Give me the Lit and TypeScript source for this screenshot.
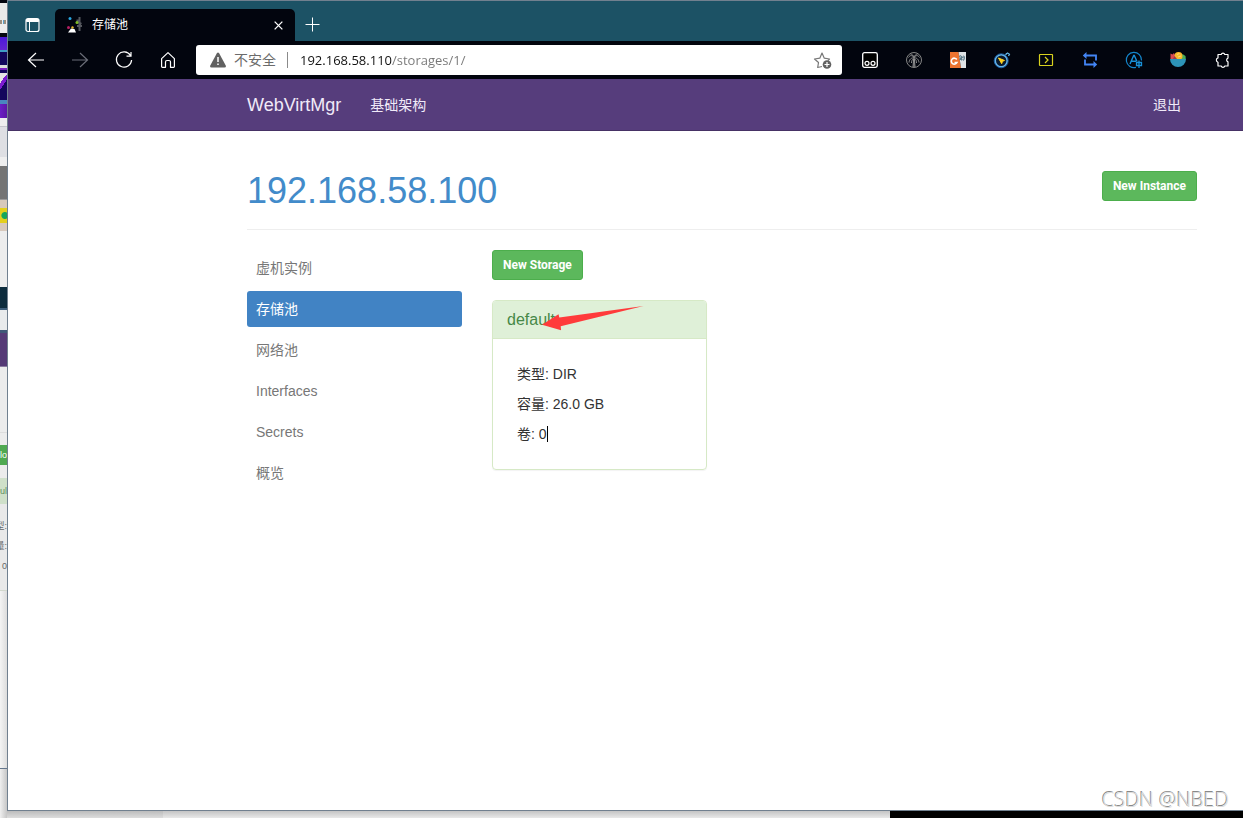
import { LitElement, html, css, svg } from "lit";
import { customElement, state } from "lit/decorators.js";

const icon = (body: unknown, size = 20) => html`<svg
  width=${size}
  height=${size}
  viewBox="0 0 20 20"
  fill="none"
  aria-hidden="true"
>${body}</svg>`;

const navIcons = [
  { label: "Back", art: svg`<path d="M18 10H2.5M10 3 2.5 10l7.5 7" stroke="#fff" stroke-width="1.2"/>` },
  { label: "Forward", art: svg`<path d="M2 10h15.500M10 3l7.500 7-7.500 7" stroke="#6b6e78" stroke-width="1.200"/>` },
  { label: "Refresh", art: svg`<path d="M16.500 5.500A7.600 7.600 0 1 0 17.600 10M17 2v4.200h-4.500" stroke="#fff" stroke-width="1.200"/>` },
  { label: "Home", art: svg`<path d="M3.600 8.600 10 2.600l6.400 6V16.500a.8.8 0 0 1-.8.8h-3.100V12a1.500 1.500 0 0 0-1.500-1.500H9A1.500 1.500 0 0 0 7.500 12v5.300H4.400a.8.8 0 0 1-.8-.8z" stroke="#fff" stroke-width="1.200" stroke-linejoin="round"/>` },
];

const extensions = [
  {
    label: "Tampermonkey",
    art: svg`<rect x="2.700" y="2.700" width="14.600" height="14.600" rx="1.800" fill="#000" stroke="#fff" stroke-width="1.300"/>
      <circle cx="7" cy="13.300" r="2" stroke="#fff" stroke-width="1.200"/><circle cx="13" cy="13.300" r="2" stroke="#fff" stroke-width="1.200"/>`,
  },
  {
    label: "Palm",
    art: svg`<circle cx="10" cy="10" r="7.500" stroke="#858585" stroke-width="1"/>
      <path d="M10 8v9M9 17l.6-8M11 17l-.6-8M10 7.500C8 5 6 5 4.500 7.500M10 7.500C12 5 14 5 15.500 7.500M10 8C7.500 7.500 5.500 9 5 12.500M10 8c2.500-.5 4.500 1 5 4.500M10 7.500C9.500 5.500 8 4 6.500 4M10 7.500C10.500 5.500 12 4 13.500 4M9.500 9c-1.500.5-2 2-2 4M10.500 9c1.500.5 2 2 2 4" stroke="#9a9a9a" stroke-width=".9"/>`,
  },
  {
    label: "Translate",
    art: svg`<path d="M2 2h8.500l2.500 16H2z" fill="#ed7430"/><path d="M10.500 2H18v16h-5z" fill="#dfe3e6"/>
      <path d="M8.800 9.500A3 3 0 1 0 9 12.500H6.500" stroke="#fff" stroke-width="1.600"/>
      <path d="M11 6.500l2-1M12 9.500l1.500-3 2 1.500M11.500 9.500h3M15 6c2 0 2 3 0 4.500M13.500 10.500v-4" stroke="#5f7d8c" stroke-width="1.100"/>`,
  },
  {
    label: "Timer",
    art: svg`<circle cx="9.200" cy="10.800" r="6" fill="#0b1a2c" stroke="#64b5ea" stroke-width="1.600"/><circle cx="9.200" cy="10.800" r="7" stroke="#2474c4" stroke-width=".8"/>
      <path d="M6.500 8l6 2.500-2 .8-.8 2.400z" fill="#ffd21f" stroke="#ffd21f"/><path d="M13.500 4.800 15 3.200M15 2.800l2.500 1.500M16.500 6l1.200-2" stroke="#65b9e8" stroke-width="1.300"/>`,
  },
  {
    label: "Console",
    art: svg`<rect x="3.500" y="4.500" width="13" height="11" rx=".5" stroke="#d9d21e" stroke-width="1.200"/><path d="M9 7l3 3-3 3" stroke="#d9d21e" stroke-width="1.200"/>`,
  },
  {
    label: "Swap",
    art: svg`<path d="M5 5.500h11v5M15 14.500H5v-5" stroke="#4385f5" stroke-width="1.800"/><path d="M2.800 5.500 6.500 2v7zM17.200 14.500 13.500 11v7z" fill="#4385f5"/>`,
  },
  {
    label: "Language",
    art: svg`<path d="M12 17.300A7.600 7.600 0 1 1 17.500 10.500" stroke="#1486cc" stroke-width="1.200"/>
      <path d="M6 14l3.700-8.500h.6L13 11.500M7.500 11.300h4.500" stroke="#1890d8" stroke-width="1.400"/><path d="M12.500 12.500h5v3h-5zM15 10.500V18" stroke="#1890d8" stroke-width="1.300"/>`,
  },
  {
    label: "Fruit bowl",
    art: svg`<path d="M2.500 9V3.500l2 1L6 3l3 6z" fill="#d94b51"/><path d="M13 9l1.500-5 3 2 .3 3z" fill="#4aad58"/><circle cx="10.500" cy="6" r="4" fill="#f8b92c"/><path d="M5 9l1.500-3L9 9z" fill="#9b3a49"/>
      <path d="M2 9h16a8 8 0 0 1-16 0z" fill="#2d94b8"/><path d="M9 4.500l2.500-1M10 7l3-1" stroke="#ffdc6a"/>`,
  },
  {
    label: "Extensions",
    art: svg`<path d="M6 4.500h3.200a1.900 1.900 0 0 1 3.600 0H16v3.600a2 2 0 0 0 0 3.800v4.100h-3.200a1.900 1.900 0 0 1-3.600 0H6V12.300a2.300 2.300 0 0 1 0-4.400z" stroke="#fff" stroke-width="1.200" stroke-linejoin="round"/>`,
  },
];

@customElement("backdrop-strip")
class BackdropStrip extends LitElement {
  static styles = css`
    :host { display: flex; flex-direction: column; width: 7px; overflow: hidden; background: #e8e8e8; font: 9px/12px "Liberation Sans", "Noto Sans CJK SC", sans-serif; }
    .part { flex: none; display: flex; align-items: center; justify-content: flex-end; overflow: hidden; white-space: nowrap; color: #666; }
    .button { color: #fff; }
    .title { color: #5d8f5d; }
    .rest { flex: 1; background: linear-gradient(90deg, #efefef, #c6c6c6); }
  `;
  private parts: [number, string, string?, string?][] = [
    [3, "#02050e"], [17, "#e9e9e9"], [4, "repeating-linear-gradient(90deg,#9b8f80 0 2px,#eee 2px 3px,#5aa0c8 3px 4px)"], [9, "#ececec"], [4, "#05070f"],
    [13, "linear-gradient(#4b18d8,#6526d0)"], [2, "#3f9fc6"], [13, "#13075c"], [3, "#ddd"], [2, "#7a1bc0"], [3, "#13075c"], [2, "#e5e5e5"],
    [25, "linear-gradient(125deg,#e6e6e6 0 24%,#7a1bd0 24% 42%,#13075c 42%)"], [4, "#4a86c0"], [14, "linear-gradient(90deg,#6b1fc4,#5b17a6)"],
    [8, "#eee"], [1, "#c5c5cc"], [30, "#dedfe3"], [9, "#eee"], [33, "#747474"], [1, "#999"], [8, "#d8c9bc"],
    [15, "radial-gradient(circle at 70% 50%,#17a75b 0 3px,#e4cf1c 4px)"], [8, "#d8c9bc"], [56, "#ededed"], [21, "#0d2c3d"],
    [2, "#3f5f7c"], [20, "#e9ebec"], [3, "#3f5877"], [33, "#553a76"], [1, "#8a7ba0"], [65, "#ececec"], [1, "#ddd"], [12, "#ececec"],
    [20, "#4fa951", "lo", "button"], [13, "#ececec"], [26, "#cfe0c9", "ul", "title"], [12, "#e9e9e9"], [20, "#e9e9e9", "型:"], [20, "#e9e9e9", "量:"],
    [20, "#e9e9e9", "0"], [14, "#e9e9e9"], [1, "#d2d8cd"], [177, "linear-gradient(90deg,#f4f4f4,#dcdcdc)"], [1, "#64768c"],
  ];
  render() {
    return html`${this.parts.map(([h, bg, text, kind]) => html`<div class="part ${kind ?? ""}" style="height:${h}px;background:${bg}">${text ?? ""}</div>`)}
      <div class="rest"></div>`;
  }
}

@customElement("browser-chrome")
class BrowserChrome extends LitElement {
  static styles = css`
    :host { display: block; background: #02050e; color: #fff; font: 12px/16px "Noto Sans", "Noto Sans CJK SC", sans-serif; }
    * { box-sizing: border-box; }
    button { display: grid; place-items: center; padding: 0; border: 0; background: none; color: inherit; font: inherit; }
    svg { display: block; }
    .tabs { display: flex; height: 40px; padding-top: 8px; background: #1c5265; }
    .menu { width: 47px; }
    .tab { display: flex; align-items: center; width: 240px; padding: 0 8px 0 12px; background: #02050e; border-radius: 5px 5px 0 0; }
    .name { flex: 1; margin-left: 9px; }
    .close { width: 17px; height: 24px; }
    .add { width: 36px; }
    .toolbar { display: flex; align-items: center; height: 38px; padding-left: 6px; }
    .tool { flex: none; width: 44px; height: 38px; }
    .address { flex: 1; display: flex; align-items: center; min-width: 0; height: 30px; margin: 0 6px; padding: 0 9px 0 12px; border-radius: 3px; background: #fff; color: #6b6b6b; font-size: 14px; line-height: 20px; }
    .unsafe { margin-left: 6px; padding-right: 11px; border-right: 1px solid #8a8a8a; line-height: 16px; white-space: nowrap; }
    .url { flex: 1; min-width: 0; height: 24px; margin-left: 12px; padding: 0; border: 0; outline: 0; font: 13px/20px "Open Sans", "Noto Sans", sans-serif; color: transparent; background: linear-gradient(90deg, #111 92px, #767676 92px); -webkit-background-clip: text; background-clip: text; }
    .extensions { display: flex; margin-right: -1px; }
  `;
  render() {
    return html`
      <div class="tabs">
        <button class="menu" aria-label="Tab actions">${icon(svg`<rect x="4" y="3.500" width="13" height="13" rx="2" stroke="#fff" stroke-width="1.200"/><path d="M4.500 4.500h12v2h-12z" fill="#fff" stroke="#fff"/><path d="M7.500 7v9" stroke="#fff"/>`)}</button>
        <div class="tab">
          <svg width="16" height="16" viewBox="0 0 16 16" aria-hidden="true">
            <circle cx="3" cy="1.500" r="1.500" fill="#2aa6df"/><circle cx="1.500" cy="10.500" r="1.500" fill="#b51f63"/><path d="M1 15.500 4 11.500l3.500.5 1.500 3.500z" fill="#fff"/>
            <circle cx="5.500" cy="10.500" r="1.200" fill="#e7b72d"/><path d="M12.500 0v14M10.500 2.500v4M14 5.500l-2 4M10 9h5" stroke="#55585e" stroke-width="2"/><circle cx="10" cy="5.500" r="1.500" fill="#7fbd25"/>
          </svg>
          <span class="name">存储池</span>
          <button class="close" aria-label="Close tab">${icon(svg`<path d="M3 3l14 14M17 3 3 17" stroke="#fff" stroke-width="2.400"/>`, 11)}</button>
        </div>
        <button class="add" aria-label="New tab">${icon(svg`<path d="M9.500 2.500v14M2.500 9.500h14" stroke="#fff" stroke-width="1"/>`)}</button>
      </div>
      <div class="toolbar">
        ${navIcons.map((i) => html`<button class="tool" aria-label=${i.label}>${icon(i.art)}</button>`)}
        <div class="address">
          <svg width="20" height="20" viewBox="0 0 20 20" aria-hidden="true"><path d="M9 3q1-1 2 0l7 13q0 1.500-1.500 1.500h-13Q2 17.500 2 16z" fill="#616161"/><path d="M10 7v5M10 13.500v1.500" stroke="#fff" stroke-width="1.500"/></svg>
          <span class="unsafe">不安全</span>
          <input class="url" aria-label="Address" value="192.168.58.110/storages/1/" />
          <button aria-label="Add to favorites">${icon(svg`<path d="M9 16.500l-4.300 1L5.500 12.500 1.500 9l5.300-.8L9 3l2.300 5.200 5.200.8-1.500 1.500" stroke="#777" stroke-width="1.200" stroke-linejoin="round"/><circle cx="14" cy="14.500" r="4.300" fill="#616161"/><path d="M14 12v5M11.500 14.500h5" stroke="#fff" stroke-width="1.200"/>`)}</button>
        </div>
        <div class="extensions">${extensions.map((i) => html`<button class="tool" aria-label=${i.label}>${icon(i.art)}</button>`)}</div>
      </div>
    `;
  }
}

@customElement("storage-page")
class StoragePage extends LitElement {
  static styles = css`
    :host { display: block; background: #fff; color: #333; font: 14px/20px "Liberation Sans", "Noto Sans CJK SC", sans-serif; }
    * { box-sizing: border-box; }
    a { color: inherit; text-decoration: none; }
    .bar { display: flex; align-items: center; height: 52px; padding: 0 62px 0 239px; background: #563d7c; border-bottom: 1px solid #463265; color: #f0eaf8; }
    .brand { font-size: 18px; margin-right: 29px; }
    .logout { margin-left: auto; }
    .content { padding: 40px 46px 0 239px; }
    .header { display: flex; justify-content: space-between; align-items: flex-start; padding-bottom: 18px; border-bottom: 1px solid #eee; margin-bottom: 20px; }
    h1 { margin: 0; font-size: 36px; line-height: 40px; font-weight: 400; color: #428bca; }
    .btn { height: 30px; padding: 0 10px; border: 1px solid #4cae4c; border-radius: 3px; background: #5cb85c; color: #fff; font: bold 12px/18px Roboto, "Liberation Sans", sans-serif; }
    .columns { display: flex; gap: 30px; align-items: flex-start; }
    .side { display: flex; flex-direction: column; gap: 5px; width: 215px; }
    .item { padding: 8px 9px; border-radius: 3px; color: #777; }
    .active { background: #4183c4; color: #fff; }
    .panel { position: relative; width: 215px; margin-top: 20px; border: 1px solid #d6e9c6; border-radius: 4px; box-shadow: 0 1px 1px rgba(0, 0, 0, 0.05); }
    h3 { margin: 0; padding: 9px 14px 8px; border-bottom: 1px solid #d6e9c6; border-radius: 3px 3px 0 0; background: #dff0d8; color: #468847; font-size: 16px; font-weight: 400; }
    .facts { padding: 20px 24px; line-height: 30px; }
    .facts p { display: flex; align-items: center; margin: 0; height: 30px; }
    .caret { width: 1px; height: 16px; background: #000; }
    .arrow { position: absolute; left: 49px; top: 4px; pointer-events: none; }
  `;
  @state() private menu = ["虚机实例", "存储池", "网络池", "Interfaces", "Secrets", "概览"];
  render() {
    return html`
      <nav class="bar"><a class="brand" href="#">WebVirtMgr</a><a href="#">基础架构</a><a class="logout" href="#">退出</a></nav>
      <main class="content">
        <header class="header"><h1><a href="#">192.168.58.100</a></h1><button class="btn">New Instance</button></header>
        <div class="columns">
          <nav class="side">${this.menu.map((m, i) => html`<a class="item ${i === 1 ? "active" : ""}" href="#">${m}</a>`)}</nav>
          <section>
            <button class="btn">New Storage</button>
            <article class="panel">
              <h3><a href="#">default</a></h3>
              <div class="facts"><p>类型: DIR</p><p>容量: 26.0 GB</p><p>卷: 0<span class="caret"></span></p></div>
              <svg class="arrow" width="102" height="26" viewBox="0 0 102 26" aria-hidden="true"><path d="M0 19.700 16.500 9.200l.8 3.300L101.500 1 18.700 21.200l.4 4z" fill="#ff3b3b"/></svg>
            </article>
          </section>
        </div>
      </main>
    `;
  }
}

@customElement("app-root")
class AppRoot extends LitElement {
  static styles = css`
    :host { display: block; }
    .desktop { position: relative; display: grid; grid-template-columns: 7px 1fr; grid-template-rows: 1fr 7px; height: 100vh; overflow: hidden; }
    .strip { grid-row: 1 / 3; }
    .window { display: flex; flex-direction: column; min-width: 0; border: solid #71808f; border-width: 1px 0 1px 1px; background: #fff; }
    .page { flex: 1; }
    .floor { display: flex; }
    .shade { width: 156px; background: linear-gradient(#bcbcbc, #dcdcdc); }
    .light { flex: 727; background: linear-gradient(#c4c4c4, #e8e8e8); }
    .dark { flex: 353; background: #000; }
    .mark { position: absolute; right: 14px; bottom: 6px; color: #ddd; font: 300 20px/24px "Open Sans", "Noto Sans", sans-serif; text-shadow: -1px -1px 0 #888; }
  `;
  render() {
    return html`
      <div class="desktop">
        <backdrop-strip class="strip"></backdrop-strip>
        <div class="window"><browser-chrome></browser-chrome><storage-page class="page"></storage-page></div>
        <div class="floor"><div class="shade"></div><div class="light"></div><div class="dark"></div></div>
        <div class="mark">CSDN @NBED</div>
      </div>
    `;
  }
}
